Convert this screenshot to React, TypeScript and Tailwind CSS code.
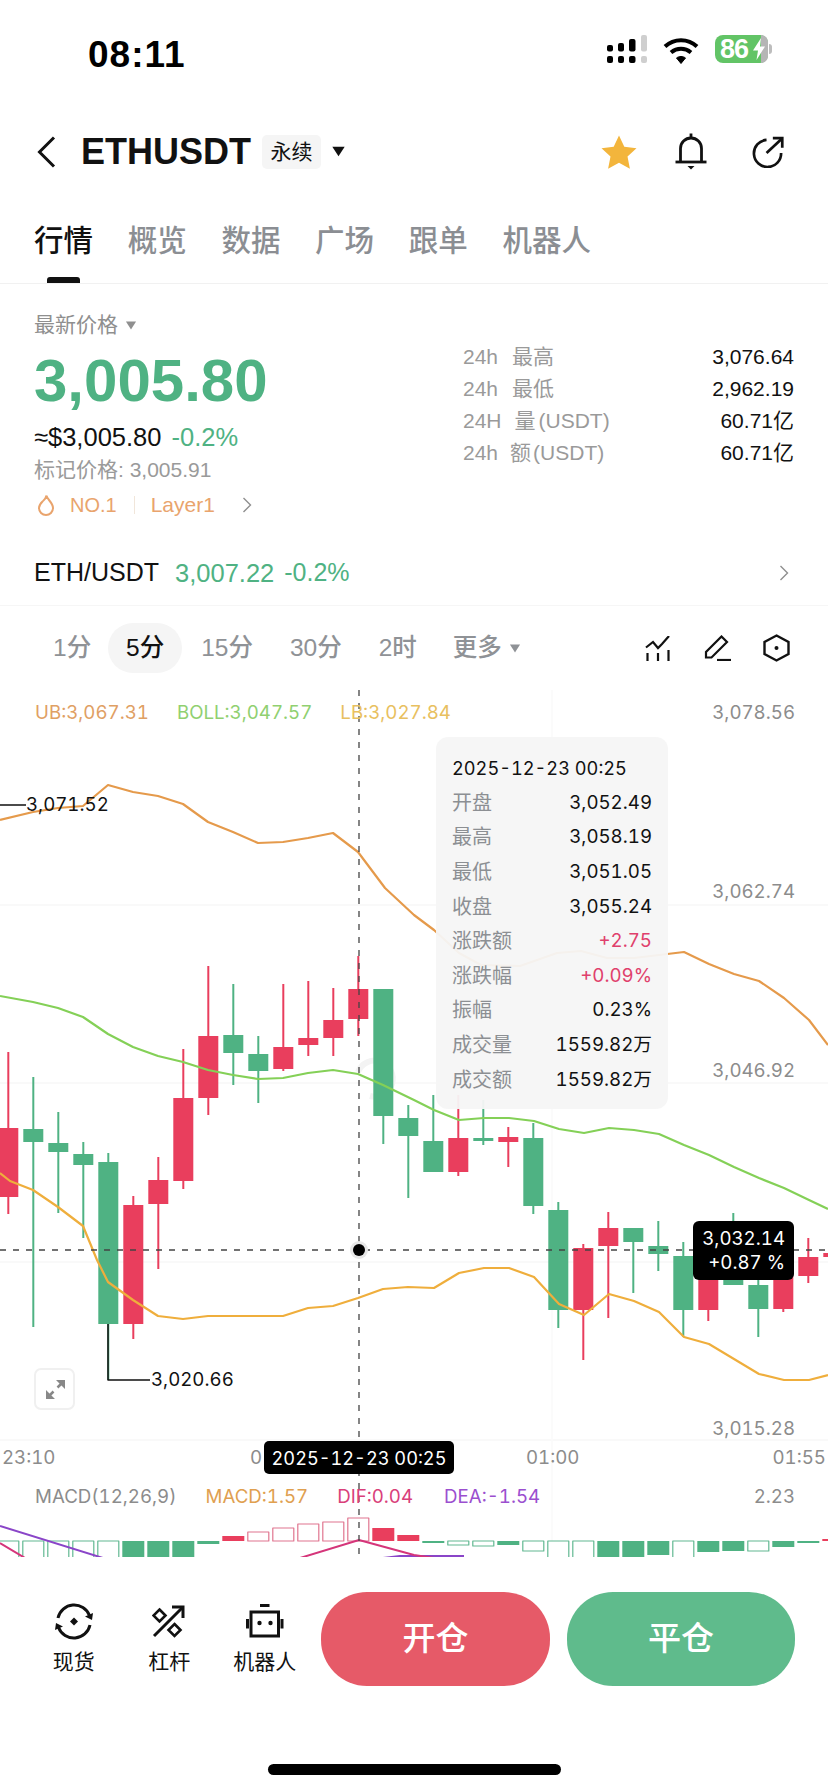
const RED = '#e93e5d';
const GREEN = '#4fb283';

// [color, wickTop, wickBottom, bodyTop, bodyBottom], 25px apart
const candles: [string, number, number, number, number][] = [
  ['r', 1052, 1214, 1128, 1197],
  ['g', 1077, 1327, 1129, 1142],
  ['g', 1112, 1213, 1143, 1152],
  ['g', 1142, 1238, 1154, 1165],
  ['g', 1153, 1380, 1162, 1324],
  ['r', 1196, 1339, 1205, 1324],
  ['r', 1157, 1269, 1180, 1204],
  ['r', 1049, 1189, 1098, 1181],
  ['r', 966, 1115, 1036, 1098],
  ['g', 984, 1085, 1035, 1053],
  ['g', 1036, 1103, 1054, 1071],
  ['r', 984, 1071, 1047, 1069],
  ['r', 981, 1056, 1038, 1045],
  ['r', 988, 1056, 1020, 1038],
  ['r', 956, 1036, 989, 1019],
  ['g', 989, 1144, 989, 1116],
  ['g', 1105, 1198, 1118, 1136],
  ['g', 1095, 1172, 1141, 1172],
  ['r', 1095, 1176, 1138, 1172],
  ['g', 1100, 1145, 1138, 1141],
  ['r', 1127, 1167, 1137, 1142],
  ['g', 1123, 1214, 1138, 1206],
  ['g', 1202, 1328, 1210, 1310],
  ['r', 1244, 1360, 1248, 1310],
  ['r', 1212, 1318, 1228, 1246],
  ['g', 1228, 1293, 1228, 1242],
  ['g', 1221, 1271, 1246, 1254],
  ['g', 1242, 1337, 1256, 1310],
  ['r', 1252, 1321, 1252, 1310],
  ['g', 1213, 1285, 1270, 1285],
  ['g', 1270, 1337, 1285, 1309],
  ['r', 1245, 1312, 1245, 1309],
  ['r', 1238, 1283, 1257, 1276],
  ['r', 1245, 1270, 1253, 1257],
];

const ub =
  '0,820 33,812 58,808 83,806 108,785 133,792 158,796 183,804 208,822 233,832 258,843 283,842 308,838 333,833 358,852 385,888 414,915 434,930 459,953 481,965 520,966 557,953 581,951 607,958 634,958 684,952 709,964 734,974 759,981 784,998 809,1020 828,1045';
const boll =
  '0,996 33,1002 58,1008 83,1017 108,1034 133,1047 158,1056 183,1062 208,1070 233,1075 258,1079 283,1078 308,1073 333,1070 358,1074 383,1085 414,1100 434,1110 459,1120 484,1118 509,1118 534,1121 559,1129 584,1133 609,1128 634,1130 659,1134 684,1145 709,1155 734,1167 759,1178 784,1188 809,1200 828,1209';
const lb =
  '0,1173 10,1181 33,1190 58,1207 83,1226 97,1260 108,1282 133,1300 158,1316 183,1319 208,1316 233,1316 258,1316 283,1316 308,1308 333,1306 358,1298 383,1289 408,1287 434,1288 459,1273 484,1268 509,1268 534,1277 559,1304 584,1315 609,1294 634,1301 659,1312 684,1337 709,1344 734,1359 759,1374 784,1380 809,1380 828,1375';

// [color, top, bottom, hollow]
const macd: [string, number, number, boolean][] = [
  ['g', 1541, 1560, true],
  ['g', 1541, 1560, true],
  ['g', 1541, 1560, true],
  ['g', 1541, 1560, true],
  ['g', 1541, 1560, true],
  ['g', 1541, 1560, false],
  ['g', 1541, 1560, false],
  ['g', 1541, 1560, false],
  ['g', 1541, 1544, false],
  ['r', 1536, 1541, false],
  ['r', 1532, 1541, true],
  ['r', 1528, 1541, true],
  ['r', 1524, 1541, true],
  ['r', 1522, 1541, true],
  ['r', 1518, 1541, true],
  ['r', 1528, 1541, false],
  ['r', 1535, 1541, false],
  ['g', 1541, 1543, false],
  ['g', 1541, 1545, true],
  ['g', 1541, 1546, true],
  ['g', 1541, 1545, false],
  ['g', 1541, 1551, true],
  ['g', 1541, 1560, true],
  ['g', 1541, 1560, true],
  ['g', 1541, 1560, false],
  ['g', 1541, 1557, false],
  ['g', 1541, 1555, false],
  ['g', 1541, 1560, true],
  ['g', 1541, 1552, false],
  ['g', 1541, 1551, false],
  ['g', 1541, 1551, true],
  ['g', 1541, 1547, false],
  ['g', 1541, 1543, false],
  ['r', 1539, 1541, false],
];

const details = [
  { label: '开盘', value: '3,052.49', color: 'text-[#111]' },
  { label: '最高', value: '3,058.19', color: 'text-[#111]' },
  { label: '最低', value: '3,051.05', color: 'text-[#111]' },
  { label: '收盘', value: '3,055.24', color: 'text-[#111]' },
  { label: '涨跌额', value: '+2.75', color: 'text-[#e0406c]' },
  { label: '涨跌幅', value: '+0.09%', color: 'text-[#e0406c]' },
  { label: '振幅', value: '0.23%', color: 'text-[#111]' },
  { label: '成交量', value: '1559.82万', color: 'text-[#111]' },
  { label: '成交额', value: '1559.82万', color: 'text-[#111]' },
];

const tabs = ['概览', '数据', '广场', '跟单', '机器人'];

function Caret({ className }: { className: string }) {
  return (
    <svg viewBox="0 0 10 8" className={className} fill="currentColor">
      <path d="M0.5 0.5h9L5 7.5z" />
    </svg>
  );
}

function Chevron({ className }: { className: string }) {
  return (
    <svg viewBox="0 0 10 16" className={className} fill="none" stroke="currentColor" strokeWidth="1.4">
      <path d="M1.5 1l7 7-7 7" />
    </svg>
  );
}

function StatusBar() {
  return (
    <div className="flex h-[100px] items-start pl-[88px] pr-[56px] pt-[35px]">
      <span className="text-[37px] font-bold leading-[40px] tracking-[1px] text-black">08:11</span>
      <div className="ml-auto flex items-start">
        <svg width="42" height="30" viewBox="0 0 42 30" fill="#000">
          <rect x="1" y="10" width="6" height="6.5" rx="2" />
          <rect x="12" y="8" width="6" height="8.5" rx="2" />
          <rect x="23" y="4" width="6.5" height="12.5" rx="2" />
          <rect x="35" y="0" width="6" height="16.5" rx="2" fill="#cfcfcf" />
          <rect x="1" y="21" width="6" height="7" rx="2" />
          <rect x="12" y="21" width="6" height="7" rx="2" />
          <rect x="23" y="21" width="6.5" height="7" rx="2" />
          <rect x="35" y="21" width="6" height="7" rx="2" fill="#cfcfcf" />
        </svg>
        <svg width="36" height="28" viewBox="0 0 36 28" className="ml-[15px] mt-[2px]" fill="none" stroke="#000" strokeWidth="4">
          <path d="M2 9.5C11 1 25 1 34 9.5" />
          <path d="M8 15.5c6-5 14-5 20 0" />
          <path d="M13.5 21l4.5 5.5 4.5-5.5c-2.5-2-6.500-2-9 0z" fill="#000" strokeWidth="1" />
        </svg>
        <div className="relative ml-[16px] flex h-[28px] w-[53px] items-center rounded-[8px] bg-[#62c466] pl-[5px]">
          <span className="text-[27px] font-bold leading-[28px] tracking-[-1px] text-white">86</span>
          <div className="absolute right-0 top-0 h-full w-[7px] rounded-r-[8px] bg-[#b5b5b5]" />
          <svg width="14" height="22" viewBox="0 0 14 22" className="absolute right-[2px] top-[3px]" fill="#fff">
            <path d="M9 0L1 12.500h5L4.500 22 13 8.500H8z" />
          </svg>
        </div>
        <div className="ml-[1px] mt-[9px] h-[10px] w-[3px] rounded-r-full bg-[#bdbdbd]" />
      </div>
    </div>
  );
}

function Header() {
  return (
    <div className="flex h-[102px] items-center pl-[37px] pr-[44px] pt-[1px]">
      <svg width="19" height="32" viewBox="0 0 19 32" fill="none" stroke="#111" strokeWidth="3">
        <path d="M17 1.500L2.500 16 17 30.500" />
      </svg>
      <span className="ml-[25px] text-[36px] font-bold leading-[40px] text-[#111]">ETHUSDT</span>
      <span className="ml-[11px] flex h-[34px] w-[59px] items-center justify-center rounded-[5px] bg-[#f5f5f5] text-[21px] text-[#111]">
        永续
      </span>
      <Caret className="ml-[10px] h-[11px] w-[15px] text-[#111]" />
      <svg width="36" height="34" viewBox="0 0 36 34" className="ml-auto" fill="#f3b53c">
        <path d="M18 0.500l5.300 11.200 12.200 1.500-9 8.400 2.400 12.100L18 27.800 7.100 33.700l2.400-12.100-9-8.400 12.200-1.500z" />
      </svg>
      <svg width="32" height="37" viewBox="0 0 32 37" className="ml-[38px]" fill="none" stroke="#111" strokeWidth="2.800">
        <path d="M16 0.500v4" />
        <path d="M5.500 28V15.500a10.500 10.500 0 0 1 21 0V28" />
        <path d="M0.500 29h31" />
        <path d="M12.500 33h7l-3.500 3.500z" fill="#111" stroke="none" />
      </svg>
      <svg width="32" height="32" viewBox="0 0 33 32" className="ml-[45px]" fill="none" stroke="#111" strokeWidth="2.800">
        <path d="M15 3.500A14 14 0 1 0 30 17" />
        <path d="M15 17L31 2" />
        <path d="M21.500 1.800h9.700v9.700" />
      </svg>
    </div>
  );
}

function Tabs() {
  return (
    <div className="relative flex h-[82px] items-start border-b border-[#f1f1f1] pl-[34px] pt-[21px] text-[29.500px] leading-[36px]">
      <span className="font-medium text-[#111]">行情</span>
      {tabs.map((tab) => (
        <span key={tab} className="ml-[34.700px] font-medium text-[#8b8e93]">
          {tab}
        </span>
      ))}
      <div className="absolute bottom-0 left-[47px] h-[6px] w-[33px] rounded-t-[3px] bg-[#111]" />
    </div>
  );
}

function Quote() {
  return (
    <div className="border-b border-[#f6f6f6] px-[34px]">
      <div className="flex justify-between">
        <div className="pt-[27px]">
          <div className="flex h-[28px] items-center text-[21px] text-[#8f8f8f]">
            最新价格
            <Caret className="ml-[7px] h-[9px] w-[12px] text-[#8f8f8f]" />
          </div>
          <div className="mt-[4px] h-[76px] text-[60px] font-bold leading-[76px] text-[#4fb283]">3,005.80</div>
          <div className="mt-[4px] flex h-[28px] items-center text-[25.500px]">
            <span className="text-[#111]">≈$3,005.80</span>
            <span className="ml-[10px] text-[#4fb283]">-0.2%</span>
          </div>
          <div className="mt-[5px] h-[28px] text-[21px] leading-[28px] text-[#9a9a9a]">标记价格: 3,005.91</div>
          <div className="mt-[7px] flex h-[28px] items-center text-[20px] text-[#e9a46d]">
            <svg width="18" height="22" viewBox="0 0 18 22" className="ml-[3px]" fill="none" stroke="currentColor" strokeWidth="2">
              <path d="M9.500 1.500c.5 4 6.500 7 6.500 12.500a7 7 0 0 1-14 0c0-3 1.500-4.500 3.500-6.500 1.500-1.500 3.500-3 4-6z" />
            </svg>
            <span className="ml-[15px]">NO.1</span>
            <div className="ml-[17px] h-[18px] w-px bg-[#f1e6da]" />
            <span className="ml-[16px] text-[21px]">Layer1</span>
            <Chevron className="ml-[27px] h-[16px] w-[10px] text-[#8f8f8f]" />
          </div>
        </div>
        <div className="w-[331px] pt-[57px] text-[21px] text-[#9a9a9a]">
          <div className="flex h-[32px] items-center">
            24h<span className="ml-[14px]">最高</span>
            <span className="ml-auto text-[#111]">3,076.64</span>
          </div>
          <div className="flex h-[32px] items-center">
            24h<span className="ml-[14px]">最低</span>
            <span className="ml-auto text-[#111]">2,962.19</span>
          </div>
          <div className="flex h-[32px] items-center">
            24H<span className="ml-[13px]">量</span>
            <span className="ml-[3px]">(USDT)</span>
            <span className="ml-auto text-[#111]">60.71亿</span>
          </div>
          <div className="flex h-[32px] items-center">
            24h<span className="ml-[12px]">额</span>
            <span className="ml-[2px]">(USDT)</span>
            <span className="ml-auto text-[#111]">60.71亿</span>
          </div>
        </div>
      </div>
      <div className="mb-[12px] mt-[34px] flex h-[40px] items-center text-[25px]">
        <span className="text-[#111]">ETH/USDT</span>
        <span className="ml-[16px] text-[25.500px] text-[#4fb283]">3,007.22</span>
        <span className="ml-[10px] text-[#4fb283]">-0.2%</span>
        <Chevron className="ml-auto mr-[5px] h-[16px] w-[10px] text-[#8f8f8f]" />
      </div>
    </div>
  );
}

function Timeframes() {
  return (
    <div className="flex h-[84px] items-center pl-[53px] pr-[38px] text-[24.500px] font-medium text-[#8f9296]">
      <span>1分</span>
      <span className="ml-[17px] flex h-[50px] w-[74px] items-center justify-center rounded-[25px] bg-[#f5f5f5] text-[#111]">
        5分
      </span>
      <span className="ml-[19px]">15分</span>
      <span className="ml-[37px]">30分</span>
      <span className="ml-[37px]">2时</span>
      <span className="ml-[36px]">更多</span>
      <Caret className="ml-[7px] h-[9px] w-[12px] text-[#8f9296]" />
      <svg width="26" height="25" viewBox="0 0 26 25" className="ml-auto" fill="none" stroke="#111" strokeWidth="2.200">
        <path d="M1 11.500L8 6l5 6 4-4 7-8" />
        <path d="M2.500 17v8M13 17v8M23.500 14v11" />
      </svg>
      <svg width="28" height="26" viewBox="0 0 28 26" className="ml-[33px]" fill="none" stroke="#111" strokeWidth="2.200">
        <path d="M2 22.500V17L17.500 1.500l5.500 5.500L7.500 22.500z" />
        <path d="M13 25h14" />
      </svg>
      <svg width="27" height="28" viewBox="0 0 27 28" className="ml-[31px]" fill="none" stroke="#111" strokeWidth="2.400">
        <path d="M13.500 1.500L25.500 8v12l-12 6.500L1.500 20V8z" />
        <circle cx="13.500" cy="14" r="2" fill="#111" stroke="none" />
      </svg>
    </div>
  );
}

function ChartDrawing() {
  return (
    <svg viewBox="0 690 828 867" className="absolute inset-0 h-full w-full" fill="none" strokeLinejoin="round">
      <path d="M0 905H828M0 1083H828M0 1262H828M0 1440H828" stroke="#f7f7f7" strokeWidth="1.500" />
      <path d="M552 690V1557" stroke="#fafafa" strokeWidth="1.500" />
      <path d="M358 1072a18 18 0 1 1 12 24" stroke="#f3f3f3" strokeWidth="6" />
      {candles.map(([c, wt, wb, bt, bb], i) => {
        const x = 8.3 + 25 * i;
        const color = c === 'r' ? RED : GREEN;
        return (
          <g key={i}>
            <path d={`M${x} ${wt}V${wb}`} stroke={color} strokeWidth="2" />
            <rect x={x - 10} y={bt} width="20" height={bb - bt} fill={color} />
          </g>
        );
      })}
      <polyline points={ub} stroke="#e59a4b" strokeWidth="2.200" />
      <polyline points={boll} stroke="#84d057" strokeWidth="2.200" />
      <polyline points={lb} stroke="#efae3c" strokeWidth="2.200" />
      <path d="M0 805H26M108 1324V1380H150" stroke="#111" strokeWidth="1.500" />
      {macd.map(([c, top, bottom, hollow], i) => {
        const x = 8.3 + 25 * i;
        const color = c === 'r' ? (hollow ? '#e0758f' : RED) : hollow ? '#62b892' : GREEN;
        return hollow ? (
          <rect key={i} x={x - 10.5} y={top} width="21" height={bottom - top} fill="#fff" stroke={color} strokeWidth="1.200" />
        ) : (
          <rect key={i} x={x - 11} y={top} width="22" height={bottom - top} fill={color} />
        );
      })}
      <path d="M0 1526L103 1558M383 1558L400 1556H464" stroke="#8a45c8" strokeWidth="2" />
      <path d="M0 1543L25 1558M300 1558L359 1540L414 1555L434 1558" stroke="#d5357a" strokeWidth="2" />
      <path d="M359 690V1557M0 1250H828" stroke="#444" strokeWidth="1.300" strokeDasharray="6 7" />
      <circle cx="359" cy="1250" r="9" fill="#e8e8e8" />
      <circle cx="359" cy="1250" r="6" fill="#000" />
      <rect x="35" y="1369" width="39" height="40" rx="6" stroke="#f0f0f0" strokeWidth="2" />
      <path d="M65 1380v9l-9-9zM46 1399v-9l9 9z" fill="#888" />
      <path d="M61 1384l-3.500 3.500M50 1395l3.500-3.500" stroke="#888" strokeWidth="2.500" />
    </svg>
  );
}

function Chart() {
  return (
    <div className="relative h-[867px] overflow-hidden font-['Inter','Noto_Sans_CJK_SC',sans-serif] text-[18.700px] leading-[24px] tabular-nums">
      <ChartDrawing />
      <div className="absolute left-[35px] top-[11px] flex">
        <span className="text-[#dfa064]">UB:3,067.31</span>
        <span className="ml-[28px] text-[#90d070]">BOLL:3,047.57</span>
        <span className="ml-[28px] text-[#e8c060]">LB:3,027.84</span>
      </div>
      <span className="absolute left-[26px] top-[103px] text-[#111]">3,071.52</span>
      <span className="absolute left-[151px] top-[678px] text-[#111]">3,020.66</span>
      <span className="absolute right-[33px] top-[11px] text-[#8c8c8c]">3,078.56</span>
      <span className="absolute right-[33px] top-[190px] text-[#8c8c8c]">3,062.74</span>
      <span className="absolute right-[33px] top-[369px] text-[#8c8c8c]">3,046.92</span>
      <span className="absolute right-[33px] top-[727px] text-[#8c8c8c]">3,015.28</span>

      <div className="absolute left-[436px] top-[47px] h-[372px] w-[232px] rounded-[12px] bg-[#f5f5f5]/95 px-[16px] pt-[14px]">
        <div className="flex h-[34.600px] items-center text-[18.200px] text-[#111]">2025-12-23 00:25</div>
        {details.map((row) => (
          <div key={row.label} className="flex h-[34.600px] items-center justify-between">
            <span className="text-[20px] text-[#8c8f93]">{row.label}</span>
            <span className={row.color}>{row.value}</span>
          </div>
        ))}
      </div>

      <div className="absolute left-[693px] top-[531px] flex h-[59px] w-[101px] flex-col items-end justify-center rounded-[6px] bg-black pr-[9px] text-white">
        <span>3,032.14</span>
        <span>+0.87 %</span>
      </div>

      <span className="absolute left-[2px] top-[756px] text-[#8c8c8c]">23:10</span>
      <span className="absolute left-[250px] top-[756px] text-[#8c8c8c]">0</span>
      <span className="absolute left-[526px] top-[756px] text-[#8c8c8c]">01:00</span>
      <span className="absolute right-[2px] top-[756px] text-[#8c8c8c]">01:55</span>
      <span className="absolute left-[264px] top-[751px] flex h-[33px] w-[190px] items-center justify-center rounded-[5px] bg-black text-[18.200px] text-white">
        2025-12-23 00:25
      </span>

      <div className="absolute left-[35px] top-[795px] flex">
        <span className="text-[#8c8c8c]">MACD(12,26,9)</span>
        <span className="ml-[29px] text-[#e0a050]">MACD:1.57</span>
        <span className="ml-[29px] text-[#d9407a]">DIF:0.04</span>
        <span className="ml-[31px] text-[#9b4fcf]">DEA:-1.54</span>
      </div>
      <span className="absolute right-[33px] top-[795px] text-[#8c8c8c]">2.23</span>
    </div>
  );
}

function BottomBar() {
  return (
    <div className="pt-[35px]">
      <div className="flex pl-[26px] pr-[33px]">
        <div className="flex h-[94px] w-[95.500px] flex-col items-center pt-[11px]">
          <svg width="38" height="37" viewBox="0 0 38 37" fill="none" stroke="#111" strokeWidth="3">
            <path d="M3 15a16.500 16.500 0 0 1 31.500-2.500" />
            <path d="M35 22a16.500 16.500 0 0 1-31.500 2.500" />
            <path d="M30 13.500l7 3.500 1-7zM8 23.500L1 20l-1 7z" fill="#111" stroke="none" />
            <path d="M19 14.500l4 4-4 4-4-4z" fill="#111" stroke="none" />
          </svg>
          <span className="mt-[10px] text-[21px] leading-[24px] text-[#111]">现货</span>
        </div>
        <div className="flex h-[94px] w-[95.500px] flex-col items-center pt-[13px]">
          <svg width="34" height="33" viewBox="0 0 34 33" fill="none" stroke="#111" strokeWidth="3">
            <path d="M2 31L31 2" />
            <path d="M20 2h11v11" />
            <path d="M7.500 4.500l6 6-6 6-6-6zM22.500 19l6 6-6 6-6-6z" strokeWidth="2.600" />
          </svg>
          <span className="mt-[12px] text-[21px] leading-[24px] text-[#111]">杠杆</span>
        </div>
        <div className="flex h-[94px] w-[95.500px] flex-col items-center pt-[12px]">
          <svg width="38" height="34" viewBox="0 0 38 34" fill="none" stroke="#111" strokeWidth="3">
            <path d="M14 1.500h9.500" />
            <path d="M5 8h27.500v24H5z" />
            <path d="M1.500 15v9.500M36 15v9.500" />
            <circle cx="13.500" cy="19" r="2.200" fill="#111" stroke="none" />
            <circle cx="24.500" cy="19" r="2.200" fill="#111" stroke="none" />
          </svg>
          <span className="mt-[12px] text-[21px] leading-[24px] text-[#111]">机器人</span>
        </div>
        <button className="ml-[8.500px] flex h-[94px] w-[229px] items-center justify-center rounded-[46px] bg-[#e65a68] text-[33px] font-medium text-white">
          开仓
        </button>
        <button className="ml-[17px] flex h-[94px] w-[228px] items-center justify-center rounded-[46px] bg-[#5fbb8c] text-[33px] font-medium text-white">
          平仓
        </button>
      </div>
      <div className="mx-auto mt-[78px] h-[11px] w-[293px] rounded-full bg-black" />
    </div>
  );
}

export default function App() {
  return (
    <div className="h-[1792px] w-[828px] overflow-hidden bg-white font-['Liberation_Sans','Noto_Sans_CJK_SC',sans-serif]">
      <StatusBar />
      <Header />
      <Tabs />
      <Quote />
      <Timeframes />
      <Chart />
      <BottomBar />
    </div>
  );
}
